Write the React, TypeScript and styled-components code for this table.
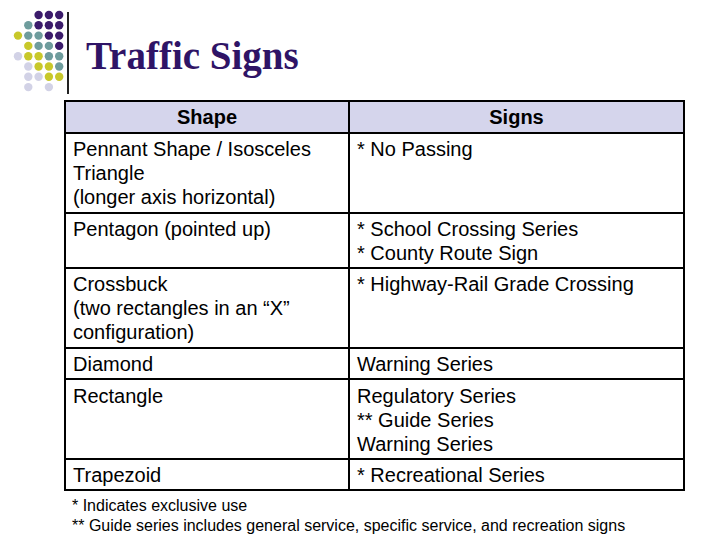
import React from 'react';
import styled, { createGlobalStyle } from 'styled-components';

const GlobalStyle = createGlobalStyle`
  html, body {
    margin: 0;
    padding: 0;
    background: #ffffff;
  }
  body {
    font-family: 'Liberation Sans', Arial, sans-serif;
    color: #000;
  }
`;

const Slide = styled.div`
  width: 720px;
  height: 540px;
  overflow: hidden;
  display: flex;
  flex-direction: column;
`;

const TitleBar = styled.header`
  height: 100px;
  display: flex;
  align-items: flex-start;
`;

const DotLogo = styled.svg`
  flex: none;
  margin-left: 12px;
  margin-top: 9px;
`;

const Divider = styled.div`
  flex: none;
  width: 2px;
  height: 82px;
  margin-top: 12px;
  margin-left: 1px;
  background: #222;
`;

const Title = styled.h1`
  margin: 0 0 0 17px;
  padding-top: 36px;
  font-family: 'Liberation Serif', 'Times New Roman', serif;
  font-weight: bold;
  font-size: 39px;
  line-height: 40px;
  color: #2f1466;
`;

const Table = styled.table`
  margin-left: 64px;
  width: 621px;
  border-collapse: collapse;
  table-layout: fixed;
  font-size: 20px;
  line-height: 24px;
`;

const HeadCell = styled.th`
  background: #d5d5ec;
  border: 2px solid #000;
  padding: 2.5px 7px 3.5px;
  font-weight: bold;
  text-align: center;
`;

const Cell = styled.td`
  border: 2px solid #000;
  padding: 3.2px 7px 2.4px;
  vertical-align: top;
  text-align: left;
`;

const Notes = styled.div`
  margin: 5px 0 0 72px;
  font-size: 16px;
  line-height: 20px;
`;

type Dot = 'P' | 'T' | 'Y' | 'L' | '_';

const dotColors: Record<Exclude<Dot, '_'>, string> = {
  P: '#3b1b6b',
  T: '#6e9c9c',
  Y: '#c8c82a',
  L: '#d2d2e6',
};

const grid: Dot[][] = [
  ['_', '_', 'P', 'P', 'P'],
  ['_', 'T', 'P', 'P', 'P'],
  ['Y', 'T', 'T', 'P', 'P'],
  ['_', 'Y', 'T', 'T', 'P'],
  ['L', 'Y', 'Y', 'T', 'T'],
  ['_', 'L', 'Y', 'Y', 'T'],
  ['_', 'L', 'L', 'Y', 'Y'],
  ['_', 'L', '_', 'L', '_'],
];

const rows: { shape: string[]; signs: string[] }[] = [
  {
    shape: ['Pennant Shape / Isosceles', 'Triangle', '(longer axis horizontal)'],
    signs: ['* No Passing'],
  },
  {
    shape: ['Pentagon (pointed up)'],
    signs: ['* School Crossing Series', '* County Route Sign'],
  },
  {
    shape: ['Crossbuck', '(two rectangles in an \u201cX\u201d', 'configuration)'],
    signs: ['* Highway-Rail Grade Crossing'],
  },
  { shape: ['Diamond'], signs: ['Warning Series'] },
  {
    shape: ['Rectangle'],
    signs: ['Regulatory Series', '** Guide Series', 'Warning Series'],
  },
  { shape: ['Trapezoid'], signs: ['* Recreational Series'] },
];

const Lines: React.FC<{ lines: string[] }> = ({ lines }) => (
  <>
    {lines.map((l, i) => (
      <div key={i}>{l}</div>
    ))}
  </>
);

export default function App() {
  return (
    <>
      <GlobalStyle />
      <Slide>
        <TitleBar>
          <DotLogo width="54" height="84" viewBox="0 0 54 84">
            {grid.map((row, r) =>
              row.map((d, c) =>
                d === '_' ? null : (
                  <circle
                    key={`${r}-${c}`}
                    cx={6 + c * 10.3}
                    cy={6 + r * 10.3}
                    r={4.2}
                    fill={dotColors[d]}
                  />
                )
              )
            )}
          </DotLogo>
          <Divider />
          <Title>Traffic Signs</Title>
        </TitleBar>
        <Table>
          <colgroup>
            <col style={{ width: 284 }} />
            <col />
          </colgroup>
          <thead>
            <tr>
              <HeadCell>Shape</HeadCell>
              <HeadCell>Signs</HeadCell>
            </tr>
          </thead>
          <tbody>
            {rows.map((row, i) => (
              <tr key={i}>
                <Cell>
                  <Lines lines={row.shape} />
                </Cell>
                <Cell>
                  <Lines lines={row.signs} />
                </Cell>
              </tr>
            ))}
          </tbody>
        </Table>
        <Notes>
          <div>* Indicates exclusive use</div>
          <div>** Guide series includes general service, specific service, and recreation signs</div>
        </Notes>
      </Slide>
    </>
  );
}
